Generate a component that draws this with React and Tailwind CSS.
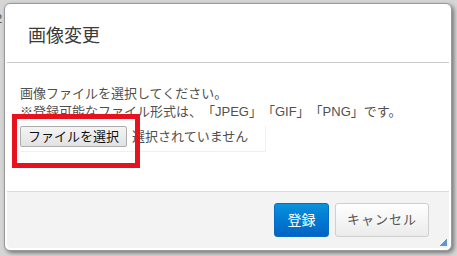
export default function App() {
  const font = { fontFamily: '"Liberation Sans", "Noto Sans CJK JP", sans-serif' };
  return (
    <div
      className="relative w-[457px] h-[256px] overflow-hidden bg-[#d6d6d6] pt-[3px] pl-[4px] [text-spacing-trim:space-all]"
      style={font}
    >
      <span className="absolute left-[-5px] top-[9px] text-[13px] text-[#555]">2</span>
      <div className="relative flex flex-col w-[448px] h-[248px] rounded-[6px] border border-[#9a9a9a] bg-white p-[2px] shadow-[2px_2px_4px_rgba(0,0,0,0.45)]">
        <div className="flex items-center h-[57px] shrink-0 border-b border-[#cccccc] pl-[21px] pt-[4px]">
          <span className="text-[18px] text-[#3a3a3a]">画像変更</span>
        </div>
        <div className="flex-1 pl-[13px] pt-[22px] text-[13px] leading-[18px] text-[#505050]">
          <div>画像ファイルを選択してください。</div>
          <div>※登録可能なファイル形式は、「JPEG」「GIF」「PNG」です。</div>
          <div className="mt-[5px] flex items-start w-[246px] h-[26px] border border-[#f0f0f0] border-l-0 border-t-0">
            <button className="h-[21px] px-[7px] text-[13px] leading-[18px] text-[#111] border border-[#adadad] rounded-[2px] bg-gradient-to-b from-[#f4f4f4] to-[#e2e2e2]">
              ファイルを選択
            </button>
            <span className="ml-[5px] mt-[2px] text-[#505050]">選択されていません</span>
          </div>
        </div>
        <div className="relative flex items-center justify-end gap-[6px] h-[57px] shrink-0 border-t border-[#d9d9d9] bg-[#f3f3f3] rounded-b-[4px] pr-[20px]">
          <button className="w-[55px] h-[34px] rounded-[3px] border border-[#0a6cc0] bg-gradient-to-b from-[#0b92dc] to-[#0062c6] text-white text-[14px]">
            登録
          </button>
          <button className="w-[94px] h-[34px] rounded-[3px] border border-[#cfcfcf] bg-gradient-to-b from-[#ffffff] to-[#ebebeb] text-[#555] text-[13px] tracking-[1px]">
            キャンセル
          </button>
          <svg
            className="absolute right-[1px] bottom-[1px]"
            width="8"
            height="8"
            viewBox="0 0 8 8"
          >
            <path d="M7 1L1 7M7 3L3 7M7 5L5 7M7 0L0 7M7 2L2 7M7 4L4 7M7 6L6 7" stroke="#3d7fc0" strokeWidth="0.8" />
          </svg>
        </div>
      </div>
      <div className="absolute left-[12px] top-[114px] w-[128px] h-[54px] border-[5px] border-[#e8121f]" />
    </div>
  );
}
